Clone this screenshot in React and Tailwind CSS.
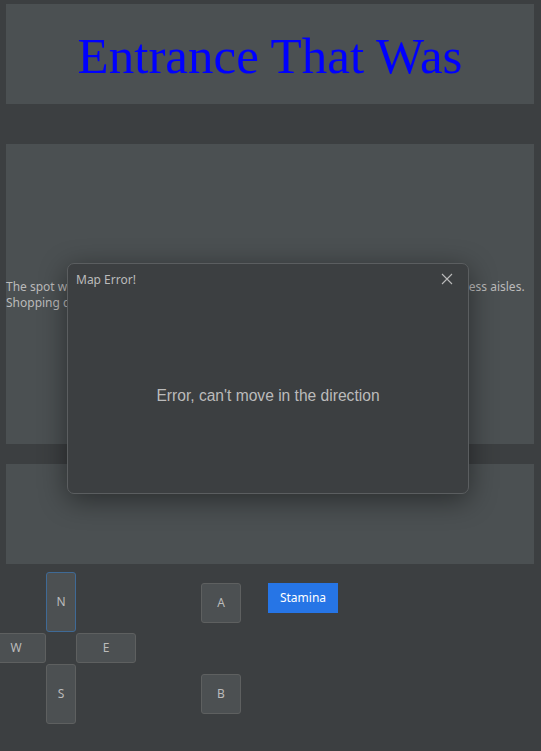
import React from 'react'

const btn = 'flex items-center justify-center rounded-[3px] border bg-[#4c5052] text-[12px] text-[#bbbbbb]'

export default function App() {
  return (
    <div className="relative min-h-[751px] w-[541px] overflow-hidden bg-[#3c3f41] font-['Noto_Sans',sans-serif]">
      <div className="ml-[6px] w-[528px] pt-[4px]">
        <div className="flex h-[100px] items-center justify-center bg-[#4b5052]">
          <h1 className="mt-[5px] font-['Liberation_Serif',serif] text-[51px] leading-none text-[#0000ff]">Entrance That Was</h1>
        </div>

        <div className="mt-[40px] flex h-[300px] items-center bg-[#4b5052]">
          <p className="mt-[2px] text-[12px] leading-[16px] text-[#bbbbbb]">
            The spot where it all started. A wide entrance that opens out onto the rows of endless aisles.<br />
            Shopping carts lie scattered about, abandoned long ago.
          </p>
        </div>

        <div className="mt-[20px] h-[100px] bg-[#4b5052]" />
      </div>

      {/* controls */}
      <div className="mt-[8px] flex">
        <div className="-ml-[14px] flex flex-col">
          <div className="ml-[60px] flex">
            <button className={`${btn} h-[60px] w-[30px] border-[#3f6a96]`}>N</button>
          </div>
          <div className="mt-[1px] flex">
            <button className={`${btn} h-[30px] w-[60px] border-[#5e6060]`}>W</button>
            <div className="w-[30px]" />
            <button className={`${btn} h-[30px] w-[60px] border-[#5e6060]`}>E</button>
          </div>
          <div className="ml-[60px] mt-[1px] flex">
            <button className={`${btn} h-[60px] w-[30px] border-[#5e6060]`}>S</button>
          </div>
        </div>

        <div className="ml-[65px] mt-[11px] flex flex-col gap-[51px]">
          <button className={`${btn} h-[40px] w-[40px] border-[#5e6060]`}>A</button>
          <button className={`${btn} h-[40px] w-[40px] border-[#5e6060]`}>B</button>
        </div>

        <div className="ml-[27px] mt-[11px]">
          <button className="h-[30px] w-[70px] bg-[#2675e6] text-[12px] text-white">Stamina</button>
        </div>
      </div>

      {/* dialog */}
      <div className="absolute left-[67px] top-[263px] flex h-[231px] w-[402px] flex-col rounded-[7px] border border-[#5b5e60] bg-[#3c3f41] shadow-[0_6px_28px_rgba(0,0,0,0.45)]">
        <div className="flex h-[30px] items-center justify-between pl-[8px] pr-[15px]">
          <span className="mt-[2px] text-[12px] text-[#bbbbbb]">Map Error!</span>
          <svg width="12" height="12" viewBox="0 0 12 12" className="text-[#bbbbbb]">
            <path d="M1 1L11 11M11 1L1 11" stroke="currentColor" strokeWidth="1.1" fill="none" />
          </svg>
        </div>
        <div className="flex flex-1 items-center justify-center pt-[4px]">
          <span className="font-['Liberation_Sans',sans-serif] text-[15.6px] text-[#bbbbbb]">Error, can't move in the direction</span>
        </div>
      </div>
    </div>
  )
}
